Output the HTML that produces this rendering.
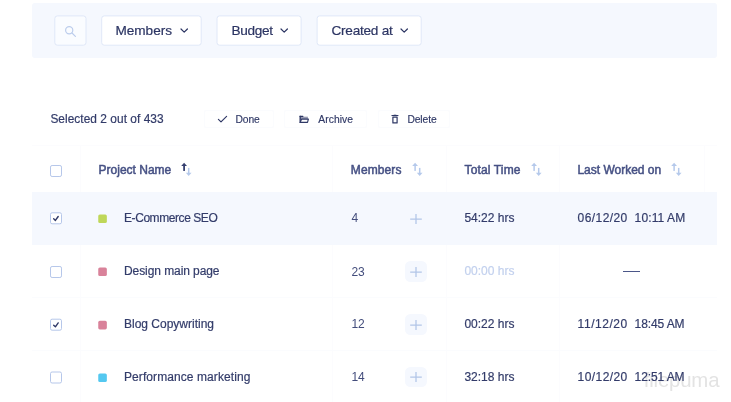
<!DOCTYPE html>
<html lang="en">
<head>
<meta charset="utf-8">
<title>Projects</title>
<style>
*{box-sizing:border-box;margin:0;padding:0}
html,body{width:731px;height:402px;overflow:hidden;background:#fff}
body{will-change:transform;position:relative;font-family:"Liberation Sans",Arial,sans-serif;color:#343d6b;-webkit-font-smoothing:antialiased}
.abs{position:absolute}
.bar{left:32px;top:3px;width:685px;height:54.5px;background:#f5f8fe;border-radius:3px}
.btn{top:15px;height:31px;border:1px solid transparent}
.search{left:54px;width:33px}
.btn span{position:absolute;top:7px;font-size:13.6px;line-height:16px;color:#2c3563;-webkit-text-stroke:.2px #2c3563;white-space:nowrap}
.btn svg{position:absolute}
.sel{left:50.4px;top:112px;font-size:11.9px;line-height:14px;color:#323b69;-webkit-text-stroke:.2px #323b69;letter-spacing:.04px;white-space:nowrap}
.act{top:110px;height:17.5px;border:1px solid #fbfcfe;border-radius:2px}
.act span{position:absolute;top:3px;font-size:10.3px;line-height:12px;color:#2f3866;-webkit-text-stroke:.15px #2f3866;white-space:nowrap;letter-spacing:-0.1px}
.act svg{position:absolute}
.th{top:162.6px;font-size:12px;line-height:14px;color:#465184;-webkit-text-stroke:.5px #465184;white-space:nowrap}
.row{left:32px;width:685px;height:53px}
.row.on{background:#f5f8fe}
.cb{left:50px;width:12px;height:12px;border:1px solid #b4c5e8;border-radius:1.5px;background:#fff}
.cb svg{position:absolute;left:1.5px;top:2px}
.sq{left:98.2px;width:8.6px;height:8.6px;border-radius:1.5px}
.td{font-size:12px;line-height:14px;color:#333c6a;-webkit-text-stroke:.2px #333c6a;white-space:nowrap}
.plus{left:405px;width:22.3px;height:20.6px;border-radius:5.5px}
.plus.bg{background:#f5f8fe}
.plus svg{position:absolute;left:5.15px;top:4.7px}
.vl{width:1px;background:#fcfcfe}
.wm{left:643.8px;top:367.5px;font-size:20.4px;line-height:24px;color:#e3e3e3;letter-spacing:-0.2px;white-space:nowrap}
</style>
</head>
<body>
<!-- filter bar -->
<div class="abs bar"></div>
<svg class="abs" style="left:32px;top:3px" width="685" height="55" viewBox="32 3 685 55" fill="#fff" stroke="#e0e8f8" stroke-width="1">
<rect x="54.8" y="15.9" width="31.2" height="29.3" rx="2.6" fill="#fafcff"/>
<rect x="101.7" y="15.9" width="99.5" height="29.3" rx="2.6"/>
<rect x="217" y="15.9" width="84.1" height="29.3" rx="2.6"/>
<rect x="317.1" y="15.9" width="104.1" height="29.3" rx="2.6"/>
</svg>
<div class="abs btn search">
  <svg style="left:9px;top:8.5px" width="13" height="13" viewBox="0 0 13 13" fill="none" stroke="#bccdec" stroke-width="1.2" stroke-linecap="round"><circle cx="5.2" cy="5.2" r="3.6"/><path d="M8 8l3.4 3.4"/></svg>
</div>
<div class="abs btn" style="left:101px;width:100.7px"><span style="left:13.4px">Members</span>
  <svg style="left:77.8px;top:12.4px" width="9" height="6" viewBox="0 0 9 6" fill="none" stroke="#2c3563" stroke-width="1.2" stroke-linecap="round" stroke-linejoin="round"><path d="M1 1l3.2 3.2L7.4 1"/></svg></div>
<div class="abs btn" style="left:216.5px;width:85.2px"><span style="left:14px;letter-spacing:-0.3px">Budget</span>
  <svg style="left:62.5px;top:12.4px" width="9" height="6" viewBox="0 0 9 6" fill="none" stroke="#2c3563" stroke-width="1.2" stroke-linecap="round" stroke-linejoin="round"><path d="M1 1l3.2 3.2L7.4 1"/></svg></div>
<div class="abs btn" style="left:316.5px;width:105.2px"><span style="left:14px;letter-spacing:-0.25px">Created at</span>
  <svg style="left:82.6px;top:12.4px" width="9" height="6" viewBox="0 0 9 6" fill="none" stroke="#2c3563" stroke-width="1.2" stroke-linecap="round" stroke-linejoin="round"><path d="M1 1l3.2 3.2L7.4 1"/></svg></div>

<!-- watermark -->
<div class="abs wm">filepuma</div>

<!-- selection / actions -->
<div class="abs sel">Selected 2 out of 433</div>
<div class="abs act" style="left:204px;width:70px"><span style="left:30.5px">Done</span>
  <svg style="left:12px;top:4.3px" width="12" height="9" viewBox="0 0 12 9" fill="none" stroke="#2f3866" stroke-width="1.15" stroke-linecap="round" stroke-linejoin="round"><path d="M1.4 4.3l2.6 2.6L9.6 1.3"/></svg></div>
<div class="abs act" style="left:284.3px;width:82.5px"><span style="left:33px;letter-spacing:.05px">Archive</span>
  <svg style="left:13.6px;top:4.1px" width="12" height="10" viewBox="0 0 12 10"><rect x="0.5" y="0.8" width="1.4" height="7.2" fill="#2f3866"/><rect x="0.5" y="0.8" width="3.9" height="1.3" rx=".4" fill="#2f3866"/><rect x="1.5" y="1.7" width="7.4" height="2.4" fill="#2f3866" fill-opacity=".5"/><path d="M2.6 4.1h6.8L8.5 7.4H1.2z" fill="#fff" stroke="#2f3866" stroke-width="1.15" stroke-linejoin="round"/></svg></div>
<div class="abs act" style="left:377.8px;width:72.7px"><span style="left:28.6px">Delete</span>
  <svg style="left:11.8px;top:3px" width="9" height="11" viewBox="0 0 9 11" fill="none" stroke="#2f3866" stroke-width="1.2" stroke-linejoin="round"><rect x="0.5" y="1" width="6.9" height="1.05" fill="#2f3866" stroke="none"/><rect x="2.7" y="0.35" width="2.6" height=".7" fill="#2f3866" fill-opacity=".45" stroke="none"/><path d="M1.9 3.1v5.8h4.2V3.1z"/></svg></div>

<!-- header -->
<svg class="abs" style="left:49px;top:164px" width="14" height="15" viewBox="0 0 14 15"><g transform="translate(0 0.0)"><rect x="1.5" y="1.5" width="11" height="11" rx="1.6" fill="#fff" stroke="#b6c7ea"/></g></svg>
<div class="abs th" style="left:98.6px">Project Name</div>
<div class="abs th" style="left:350.8px;letter-spacing:.1px">Members</div>
<div class="abs th" style="left:464.6px;letter-spacing:.13px">Total Time</div>
<div class="abs th" style="left:577.4px">Last Worked on</div>
<svg class="abs" style="left:181px;top:162px" width="12" height="15" viewBox="0 0 12 15"><path d="M0.2 4.1L3.1 0.7L6 4.1z" fill="#364070"/><rect x="2.2" y="3.4" width="1.8" height="5.5" fill="#364070"/><path d="M4.85 10.7L7.7 14L10.55 10.7z" fill="#b5c9eb"/><rect x="6.95" y="5.9" width="1.5" height="5.5" fill="#b5c9eb"/></svg>
<svg class="abs" style="left:411.5px;top:162px" width="12" height="15" viewBox="0 0 12 15"><path d="M0.2 4.1L3.1 0.7L6 4.1z" fill="#b5c9eb"/><rect x="2.35" y="3.4" width="1.5" height="5.5" fill="#b5c9eb"/><path d="M4.85 10.7L7.7 14L10.55 10.7z" fill="#b5c9eb"/><rect x="6.95" y="5.9" width="1.5" height="5.5" fill="#b5c9eb"/></svg>
<svg class="abs" style="left:530.6px;top:162px" width="12" height="15" viewBox="0 0 12 15"><path d="M0.2 4.1L3.1 0.7L6 4.1z" fill="#b5c9eb"/><rect x="2.35" y="3.4" width="1.5" height="5.5" fill="#b5c9eb"/><path d="M4.85 10.7L7.7 14L10.55 10.7z" fill="#b5c9eb"/><rect x="6.95" y="5.9" width="1.5" height="5.5" fill="#b5c9eb"/></svg>
<svg class="abs" style="left:670.7px;top:162px" width="12" height="15" viewBox="0 0 12 15"><path d="M0.2 4.1L3.1 0.7L6 4.1z" fill="#b5c9eb"/><rect x="2.35" y="3.4" width="1.5" height="5.5" fill="#b5c9eb"/><path d="M4.85 10.7L7.7 14L10.55 10.7z" fill="#b5c9eb"/><rect x="6.95" y="5.9" width="1.5" height="5.5" fill="#b5c9eb"/></svg>

<!-- faint column separators -->
<div class="abs vl" style="left:80px;top:146px;height:256px"></div>
<div class="abs vl" style="left:332px;top:146px;height:256px"></div>
<div class="abs vl" style="left:446px;top:146px;height:256px"></div>
<div class="abs vl" style="left:559px;top:146px;height:256px"></div>

<div class="abs" style="left:32px;top:297px;width:685px;height:1px;background:#fbfcfe"></div>
<div class="abs" style="left:32px;top:350px;width:685px;height:1px;background:#fbfcfe"></div>
<div class="abs" style="left:32px;top:145px;width:685px;height:1px;background:#fcfcfe"></div>
<div class="abs vl" style="left:704px;top:145px;height:47px"></div>
<!-- row 1 -->
<div class="abs row on" style="top:191.5px"></div>
<svg class="abs" style="left:49px;top:211px" width="14" height="15" viewBox="0 0 14 15"><g transform="translate(0 0.3)"><rect x="1.5" y="1.5" width="11" height="11" rx="1.6" fill="#fff" stroke="#b6c7ea"/><path d="M4.7 7.5l1.7 1.6L9.2 5.2" fill="none" stroke="#2f3866" stroke-width="1.4" stroke-linecap="round" stroke-linejoin="round"/></g></svg>
<svg class="abs" style="left:97px;top:214px" width="12" height="11" viewBox="0 0 12 11"><rect x="1.25" y="0.4" width="8.6" height="8.6" rx="1.6" fill="#bfd759"/></svg>
<div class="abs td" style="left:124px;top:211px;letter-spacing:-.43px">E-Commerce SEO</div>
<div class="abs td" style="left:351.4px;top:211px;color:#434d7c;-webkit-text-stroke-width:0">4</div>
<div class="abs plus" style="top:208.5px"><svg width="12" height="12" viewBox="0 0 12 12" stroke="#b2c5e7" stroke-width="1.25"><path d="M6 1v10M0.2 6h11.6"/></svg></div>
<div class="abs td" style="left:464.4px;top:211px">54:22 hrs</div>
<div class="abs td" style="left:577.6px;top:211px;letter-spacing:.42px">06/12/20</div>
<div class="abs td" style="left:634.6px;top:211px;letter-spacing:.12px">10:11 AM</div>

<!-- row 2 -->
<svg class="abs" style="left:49px;top:265px" width="14" height="15" viewBox="0 0 14 15"><g transform="translate(0 0.0)"><rect x="1.5" y="1.5" width="11" height="11" rx="1.6" fill="#fff" stroke="#b6c7ea"/></g></svg>
<svg class="abs" style="left:97px;top:267px" width="12" height="11" viewBox="0 0 12 11"><rect x="1.25" y="0.4" width="8.6" height="8.6" rx="1.6" fill="#d9829a"/></svg>
<div class="abs td" style="left:124px;top:264px;letter-spacing:-.08px">Design main page</div>
<div class="abs td" style="left:351.4px;top:265px;color:#434d7c;-webkit-text-stroke-width:0">23</div>
<div class="abs plus bg" style="top:261.4px"><svg width="12" height="12" viewBox="0 0 12 12" stroke="#b2c5e7" stroke-width="1.25"><path d="M6 1v10M0.2 6h11.6"/></svg></div>
<div class="abs td" style="left:464.4px;top:264px;color:#c3d1ee;-webkit-text-stroke-color:#c3d1ee">00:00 hrs</div>
<div class="abs" style="left:623px;top:270.7px;width:16.5px;height:1.2px;background:#4b5688"></div>

<!-- row 3 -->
<svg class="abs" style="left:49px;top:317px" width="14" height="15" viewBox="0 0 14 15"><g transform="translate(0 0.7)"><rect x="1.5" y="1.5" width="11" height="11" rx="1.6" fill="#fff" stroke="#b6c7ea"/><path d="M4.7 7.5l1.7 1.6L9.2 5.2" fill="none" stroke="#2f3866" stroke-width="1.4" stroke-linecap="round" stroke-linejoin="round"/></g></svg>
<svg class="abs" style="left:97px;top:320px" width="12" height="11" viewBox="0 0 12 11"><rect x="1.25" y="0.8" width="8.6" height="8.6" rx="1.6" fill="#d9829a"/></svg>
<div class="abs td" style="left:124px;top:317px">Blog Copywriting</div>
<div class="abs td" style="left:351.4px;top:317px;color:#434d7c;-webkit-text-stroke-width:0">12</div>
<div class="abs plus bg" style="top:314.4px"><svg width="12" height="12" viewBox="0 0 12 12" stroke="#b2c5e7" stroke-width="1.25"><path d="M6 1v10M0.2 6h11.6"/></svg></div>
<div class="abs td" style="left:464.4px;top:317px">00:22 hrs</div>
<div class="abs td" style="left:577.6px;top:317px;letter-spacing:.55px">11/12/20</div>
<div class="abs td" style="left:634.6px;top:317px;letter-spacing:-.1px">18:45 AM</div>

<!-- row 4 -->
<svg class="abs" style="left:49px;top:370px" width="14" height="15" viewBox="0 0 14 15"><g transform="translate(0 0.5)"><rect x="1.5" y="1.5" width="11" height="11" rx="1.6" fill="#fff" stroke="#b6c7ea"/></g></svg>
<svg class="abs" style="left:97px;top:373px" width="12" height="11" viewBox="0 0 12 11"><rect x="1.25" y="0.4" width="8.6" height="8.6" rx="1.6" fill="#54c8f0"/></svg>
<div class="abs td" style="left:124px;top:370px;letter-spacing:.08px">Performance marketing</div>
<div class="abs td" style="left:351.4px;top:370px;color:#434d7c;-webkit-text-stroke-width:0">14</div>
<div class="abs plus bg" style="top:366.6px"><svg width="12" height="12" viewBox="0 0 12 12" stroke="#b2c5e7" stroke-width="1.25"><path d="M6 1v10M0.2 6h11.6"/></svg></div>
<div class="abs td" style="left:464.4px;top:370px">32:18 hrs</div>
<div class="abs td" style="left:577.6px;top:370px;letter-spacing:.42px">10/12/20</div>
<div class="abs td" style="left:634.6px;top:370px;letter-spacing:-.1px">12:51 AM</div>

</body>
</html>
